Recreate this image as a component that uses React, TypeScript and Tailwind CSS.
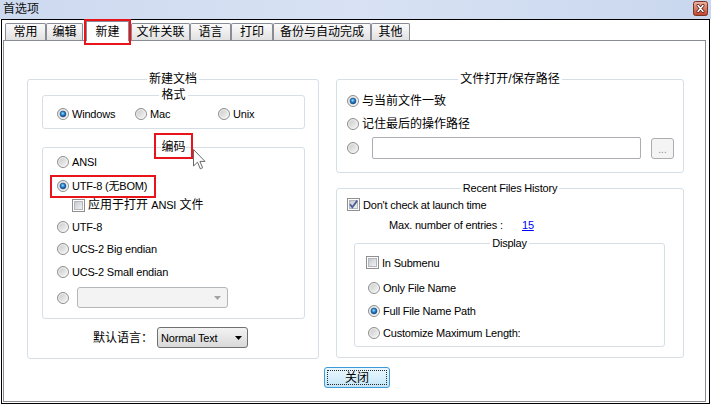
import React from "react";

const FONT = "font-['Liberation_Sans','Noto_Sans_CJK_SC',sans-serif]";

const tabs = [
  { label: "常用", w: "w-[41px]", ml: "" },
  { label: "编辑", w: "w-[37px]", ml: "" },
  { label: "新建", w: "w-[43px]", ml: "ml-[3px]", active: true },
  { label: "文件关联", w: "w-[59px]", ml: "ml-[2px]" },
  { label: "语言", w: "w-[41px]", ml: "" },
  { label: "打印", w: "w-[42px]", ml: "" },
  { label: "备份与自动完成", w: "w-[98px]", ml: "" },
  { label: "其他", w: "w-[39px]", ml: "" },
];

// shared svg gradients
const Defs = () => (
  <svg className="absolute h-0 w-0" aria-hidden="true">
    <defs>
      <linearGradient id="radioBg" x1="0" y1="0" x2="1" y2="1">
        <stop offset="0" stopColor="#c4c4c4" />
        <stop offset="1" stopColor="#fbfbfb" />
      </linearGradient>
      <radialGradient id="radioDot" cx="0.45" cy="0.4" r="0.6">
        <stop offset="0" stopColor="#a6e0ff" />
        <stop offset="0.45" stopColor="#2b8ad6" />
        <stop offset="1" stopColor="#0d3e73" />
      </radialGradient>
      <linearGradient id="checkBg" x1="0" y1="0" x2="1" y2="1">
        <stop offset="0" stopColor="#c3c7cd" />
        <stop offset="1" stopColor="#f4f4f4" />
      </linearGradient>
      <linearGradient id="closeBg" x1="0" y1="0" x2="0" y2="1">
        <stop offset="0" stopColor="#ecb3a3" />
        <stop offset="0.5" stopColor="#d97b63" />
        <stop offset="1" stopColor="#c2402a" />
      </linearGradient>
    </defs>
  </svg>
);

const Radio = ({ checked = false }: { checked?: boolean }) => (
  <svg width="12" height="12" viewBox="0 0 12 12" className="shrink-0">
    <circle cx="6" cy="6" r="5.5" fill="url(#radioBg)" stroke="#8e8f8f" />
    <circle cx="6" cy="6" r="4.3" fill="none" stroke="#f6f6f6" strokeWidth="0.7" />
    {checked && (
      <circle cx="6" cy="6" r="3" fill="url(#radioDot)" stroke="#1d4f82" strokeWidth="0.5" />
    )}
  </svg>
);

const Check = ({ checked = false }: { checked?: boolean }) => (
  <svg width="13" height="13" viewBox="0 0 13 13" className="shrink-0">
    <rect x="0.5" y="0.5" width="12" height="12" fill="#fdfdfd" stroke="#8f8f8f" />
    <rect x="2.5" y="2.5" width="8" height="8" fill="url(#checkBg)" stroke="#b4b8be" />
    {checked && (
      <path d="M3 6.3 L5.3 9.2 L10.2 2.6" fill="none" stroke="#4b5f9a" strokeWidth="1.8" />
    )}
  </svg>
);

const Label = ({ children, cjk }: { children: React.ReactNode; cjk?: boolean }) => (
  <span
    className={
      cjk
        ? "whitespace-nowrap text-[12px] leading-[16px]"
        : "whitespace-nowrap text-[11px] leading-[16px] tracking-[-0.2px]"
    }
  >
    {children}
  </span>
);

const RadioRow = ({
  label,
  checked,
  cjk,
  className = "",
}: {
  label: React.ReactNode;
  checked?: boolean;
  cjk?: boolean;
  className?: string;
}) => (
  <div className={`flex h-[16px] items-center gap-[3px] ${className}`}>
    <Radio checked={checked} />
    <Label cjk={cjk}>{label}</Label>
  </div>
);

const Group = ({
  title,
  className = "",
  latin,
  children,
}: {
  title: React.ReactNode;
  className?: string;
  latin?: boolean;
  children?: React.ReactNode;
}) => (
  <fieldset className={`rounded-[3px] border border-[#d5dfe5] ${className}`}>
    <legend
      className={`mx-auto px-[2px] leading-[14px] ${
        latin ? "text-[11px] tracking-[-0.2px]" : "text-[12px]"
      }`}
    >
      {title}
    </legend>
    {children}
  </fieldset>
);

const Arrow = ({ color }: { color: string }) => (
  <svg width="7" height="4" viewBox="0 0 7 4">
    <path d="M0 0 H7 L3.5 4 Z" fill={color} />
  </svg>
);

export default function App() {
  return (
    <div className={`relative h-[406px] w-[711px] overflow-hidden bg-white text-black ${FONT}`}>
      <Defs />

      {/* Title bar */}
      <div className="flex h-[19px] items-start justify-between bg-linear-to-r from-[#cdd9ef] via-[#d8e2f4] to-[#c9d7ee]">
        <span className="pl-[3px] pt-[2px] text-[12px] leading-[14px] text-[#111]">首选项</span>
        <svg width="15" height="15" viewBox="0 0 15 15" className="mr-[3px] mt-[1px]">
          <rect x="0.5" y="0.5" width="14" height="14" rx="2" fill="url(#closeBg)" stroke="#7a3526" />
          <path d="M5 4.5 L10 10.5 M10 4.5 L5 10.5" stroke="#4a1e14" strokeWidth="3" strokeLinecap="round" />
          <path d="M5 4.5 L10 10.5 M10 4.5 L5 10.5" stroke="#fff" strokeWidth="1.6" strokeLinecap="round" />
        </svg>
      </div>

      {/* Window frame */}
      <div className="ml-[1px] flex h-[385px] w-[709px] flex-col border border-black">
        {/* Tabs */}
        <div className="relative z-10 flex h-[20px] items-end pl-[3px]">
          {tabs.map((t) =>
            t.active ? (
              <div
                key={t.label}
                className={`relative -mb-[1px] flex h-[20px] items-center justify-center border border-b-0 border-[#898c95] bg-white text-[12px] leading-[14px] ${t.w} ${t.ml}`}
              >
                {t.label}
                <span className="absolute left-[-3px] top-[-3px] h-[26px] w-[47px] border-2 border-[#e8141a]" />
              </div>
            ) : (
              <div
                key={t.label}
                className={`flex h-[17px] items-center justify-center rounded-t-[2px] border border-b-0 border-[#898c95] bg-linear-to-b from-[#fbfbfb] to-[#e1e1e1] text-[12px] leading-[14px] ${t.w} ${t.ml}`}
              >
                {t.label}
              </div>
            )
          )}
        </div>

        {/* Tab panel */}
        <div className="ml-[1px] h-[362px] w-[703px] border border-[#898c95] bg-white">
          <div className="flex pl-[23px] pt-[31px]">
            {/* Left: 新建文档 */}
            <Group title="新建文档" className="h-[287px] w-[292px]">
              <Group title="格式" className="ml-[14px] mt-[2px] h-[41px] w-[263px]">
                <div className="ml-[14px] mt-[4px] flex">
                  <RadioRow label="Windows" checked className="w-[78px]" />
                  <RadioRow label="Mac" className="w-[83px]" />
                  <RadioRow label="Unix" />
                </div>
              </Group>

              <fieldset className="ml-[14px] mt-[11px] h-[179px] w-[263px] rounded-[3px] border border-[#d5dfe5]">
                <legend className="relative mx-auto text-[12px] leading-[14px]">
                  编码
                  <span className="absolute left-[-7px] top-[-7px] h-[26px] w-[39px] border-2 border-[#e8141a]" />
                  <svg width="13" height="21" viewBox="0 0 13 21" className="absolute left-[32px] top-[9px]">
                    <path
                      d="M0.5 0.5 V17 L4.5 13.2 L7.3 19.8 L9.6 18.8 L6.9 12.4 H12 Z"
                      fill="#fff"
                      stroke="#6a6a6a"
                      strokeLinejoin="round"
                    />
                  </svg>
                </legend>
                <div className="ml-[14px] flex flex-col">
                  <RadioRow label="ANSI" />
                  <div className="relative mt-[8px]">
                    <RadioRow label="UTF-8 (无BOM)" checked />
                    <span className="absolute left-[-7px] top-[-3px] h-[23px] w-[106px] border-2 border-[#e8141a]" />
                  </div>
                  <div className="mt-[3px] flex h-[16px] items-center gap-[3px] pl-[15px]">
                    <Check />
                    <span className="whitespace-nowrap text-[12px] leading-[16px]">
                      应用于打开 <span className="text-[11px] tracking-[-0.2px]">ANSI</span> 文件
                    </span>
                  </div>
                  <RadioRow label="UTF-8" className="mt-[6px]" />
                  <RadioRow label="UCS-2 Big endian" className="mt-[6px]" />
                  <RadioRow label="UCS-2 Small endian" className="mt-[7px]" />
                  <div className="mt-[7px] flex h-[21px] items-center">
                    <Radio />
                    <div className="ml-[8px] flex h-[21px] w-[151px] items-center justify-end rounded-[3px] border border-[#b3b7ba] bg-[#f3f3f3] pr-[6px]">
                      <Arrow color="#a3a3a3" />
                    </div>
                  </div>
                </div>
              </fieldset>

              <div className="ml-[65px] mt-[8px] flex h-[21px] items-center">
                <span className="text-[12px] leading-[14px]">默认语言：</span>
                <div className="ml-[4px] flex h-[21px] w-[91px] items-center justify-between rounded-[3px] border border-[#707070] bg-linear-to-b from-[#f3f3f3] to-[#d9d9d9] pl-[3px] pr-[5px]">
                  <span className="text-[11px] leading-[14px] tracking-[-0.2px]">Normal Text</span>
                  <Arrow color="#000" />
                </div>
              </div>
            </Group>

            {/* Right column */}
            <div className="ml-[17px] flex w-[348px] flex-col">
              <Group title="文件打开/保存路径" className="h-[101px] w-[348px]">
                <div className="ml-[10px] flex flex-col">
                  <RadioRow label="与当前文件一致" checked cjk className="mt-[7px]" />
                  <RadioRow label="记住最后的操作路径" cjk className="mt-[7px]" />
                  <div className="mt-[5px] flex h-[22px] items-center">
                    <Radio />
                    <div className="ml-[13px] h-[22px] w-[269px] rounded-[2px] border border-[#abadb3] bg-white" />
                    <div className="ml-[10px] flex h-[21px] w-[23px] items-end justify-center rounded-[3px] border border-[#adadad] bg-[#f4f4f4] pb-[3px] text-[10px] leading-[10px] text-[#8c8c8c]">
                      ...
                    </div>
                  </div>
                </div>
              </Group>

              <Group title="Recent Files History" latin className="mt-[8px] h-[177px] w-[348px]">
                <div className="ml-[10px] mt-[3px] flex h-[13px] items-center gap-[3px]">
                  <Check checked />
                  <Label>Don't check at launch time</Label>
                </div>
                <div className="ml-[52px] mt-[7px] flex h-[14px] items-center text-[11px] leading-[14px] tracking-[-0.2px]">
                  <span className="w-[133px] whitespace-nowrap">Max. number of entries :</span>
                  <span className="text-[#0000ff] underline">15</span>
                </div>
                <Group title="Display" latin className="ml-[17px] mt-[4px] h-[111px] w-[311px]">
                  <div className="ml-[11px] mt-[6px] flex h-[13px] items-center gap-[3px]">
                    <Check />
                    <Label>In Submenu</Label>
                  </div>
                  <div className="ml-[13px] flex flex-col">
                    <RadioRow label="Only File Name" className="mt-[11px]" />
                    <RadioRow label="Full File Name Path" checked className="mt-[7px]" />
                    <RadioRow label="Customize Maximum Length:" className="mt-[6px]" />
                  </div>
                </Group>
              </Group>
            </div>
          </div>

          {/* Close */}
          <div className="mt-[8px] pl-[320px]">
            <button className="relative flex h-[21px] w-[66px] items-center justify-center rounded-[3px] border border-[#3c9bd6] bg-linear-to-b from-[#eaf6fd] via-[#d9f0fc] to-[#c3e4f6] text-[12px] leading-[14px]">
              <span className="absolute inset-[2px] border border-dotted border-[#2a2a2a]" />
              关闭
            </button>
          </div>
        </div>
      </div>
    </div>
  );
}
